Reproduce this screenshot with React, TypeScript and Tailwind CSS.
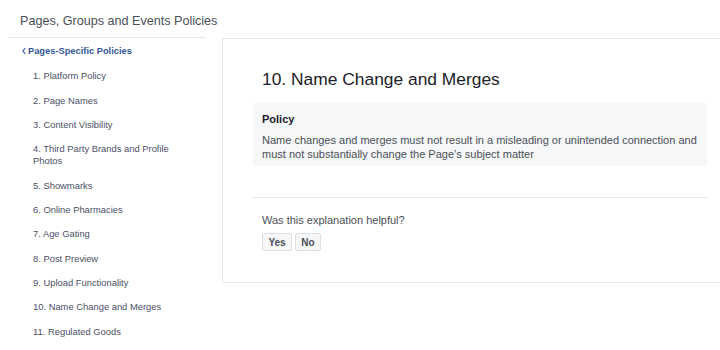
import React from "react";

const policies = [
  "1. Platform Policy",
  "2. Page Names",
  "3. Content Visibility",
  "4. Third Party Brands and Profile Photos",
  "5. Showmarks",
  "6. Online Pharmacies",
  "7. Age Gating",
  "8. Post Preview",
  "9. Upload Functionality",
  "10. Name Change and Merges",
  "11. Regulated Goods",
];

function Sidebar() {
  return (
    <div className="w-[198px] ml-[8px] shrink-0">
      <div className="h-[38px] border-b border-[#e5e6e9] pl-[12px] pt-[13px]">
        <h1 className="whitespace-nowrap text-[12.6px] leading-[16px] text-[#4b4f56]">
          Pages, Groups and Events Policies
        </h1>
      </div>
      <nav className="pr-[22px] pt-[1px]">
        <a className="flex items-center pl-[13px] pt-[6px] pb-[7px] text-[9.3px] leading-[12.3px] font-bold text-[#365899]">
          <svg width="6" height="8" viewBox="0 0 6 8" className="mr-[1px]">
            <path d="M4.3 1.2 L1.8 4 L4.3 6.8" fill="none" stroke="#365899" strokeWidth="1.1" />
          </svg>
          Pages-Specific Policies
        </a>
        <ul>
          {policies.map((p) => (
            <li
              key={p}
              className="pl-[25px] py-[6px] text-[9.4px] leading-[12.3px] text-[#4b4f66]"
            >
              {p}
            </li>
          ))}
        </ul>
      </nav>
    </div>
  );
}

function PolicyCard() {
  return (
    <div className="ml-[16px] mt-[38px] w-[516px] shrink-0 self-start border border-[#e5e6e9] bg-white pt-[29px] pb-[31px] px-[30px]">
      <h2 className="pl-[9px] text-[17.4px] leading-[22px] text-[#1d2129] mb-[13px]">
        10. Name Change and Merges
      </h2>
      <div className="bg-[#f6f7f9] pt-[8px] pb-[5px] px-[9px]">
        <div className="text-[11px] leading-[16px] font-bold text-[#1d2129] mb-[6px]">
          Policy
        </div>
        <p className="text-[11px] leading-[14px] text-[#4b4f56]">
          Name changes and merges must not result in a misleading or unintended connection and
          must not substantially change the Page’s subject matter
        </p>
      </div>
      <div className="mt-[31px] border-t border-[#e5e6e9] pt-[15px] pl-[9px]">
        <div className="text-[11px] leading-[14px] text-[#4b4f56]">
          Was this explanation helpful?
        </div>
        <div className="flex gap-[3px] mt-[6px]">
          <button className="w-[30px] h-[18px] rounded-[2px] border border-[#dddfe2] bg-[#f6f7f9] text-[10px] font-bold text-[#4b4f56]">
            Yes
          </button>
          <button className="w-[26px] h-[18px] rounded-[2px] border border-[#dddfe2] bg-[#f6f7f9] text-[10px] font-bold text-[#4b4f56]">
            No
          </button>
        </div>
      </div>
    </div>
  );
}

export default function App() {
  return (
    <div
      className="w-[720px] h-[350px] overflow-hidden bg-white flex"
      style={{ fontFamily: "'Liberation Sans', Arial, sans-serif" }}
    >
      <Sidebar />
      <PolicyCard />
    </div>
  );
}
